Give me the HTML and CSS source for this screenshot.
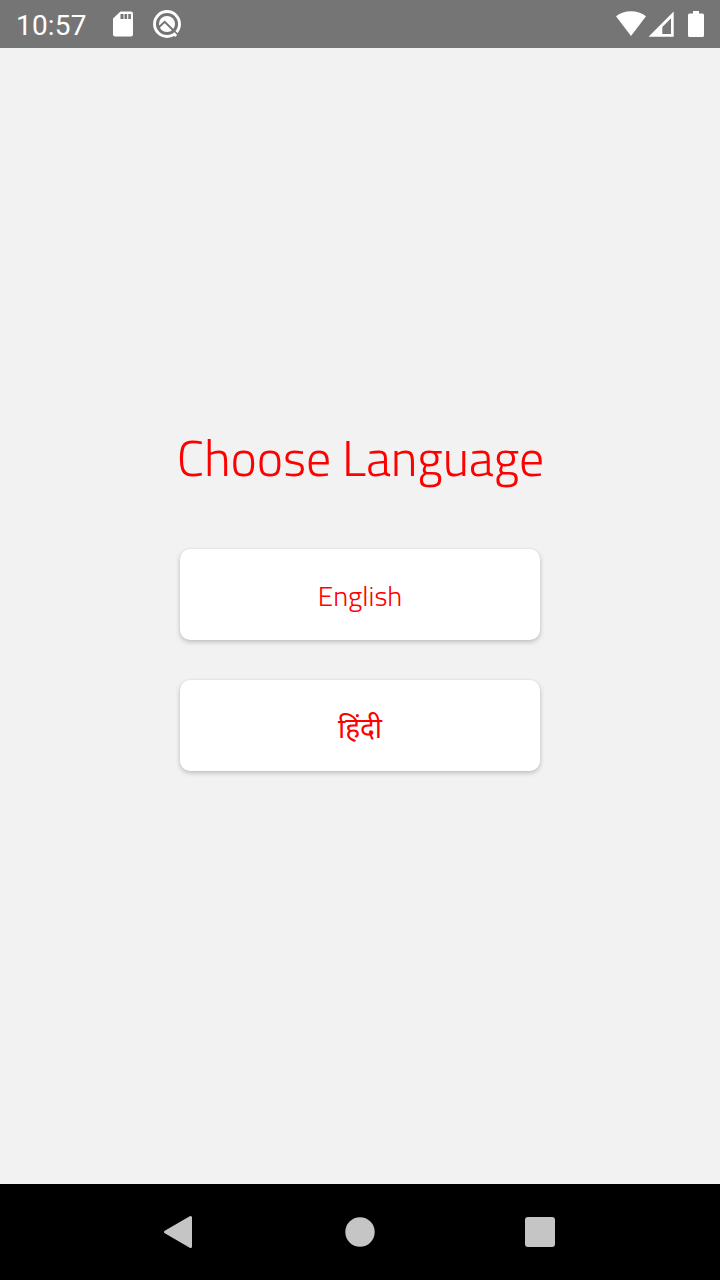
FILE: index.html
```html
<!DOCTYPE html>
<html lang="en">
<head>
<meta charset="utf-8">
<title>Choose Language</title>
<link rel="stylesheet" href="styles.css">
</head>
<body>
<div class="screen">
  <header class="status">
    <span class="clock">10:57</span>
    <svg class="sd" width="20" height="26" viewBox="0 0 20 26"><path fill="#fff" d="M7.5 .5H18a2 2 0 0 1 2 2v21a2 2 0 0 1-2 2H2a2 2 0 0 1-2-2V7.500z"/><path fill="#757575" d="M7.500 3h3v5h-3zM11.500 3h2.600v5h-2.600zM15.300 3h2.600v5h-2.600z"/></svg>
    <svg class="q" width="28" height="28" viewBox="0 0 28 28"><circle cx="14" cy="14" r="12.500" fill="none" stroke="#fff" stroke-width="2.900"/><circle cx="14" cy="14" r="8" fill="#fff"/><path fill="none" stroke="#757575" stroke-width="2" d="M4.800 18.300L11.700 11.800L27 27"/><path fill="none" stroke="#fff" stroke-width="2.800" d="M20.500 23.300l2.600 2.700"/></svg>
    <span class="grow"></span>
    <svg class="wifi" width="30" height="25" viewBox="0 0 30 25"><path fill="#fff" d="M0 5.200Q6.500 .3 15 .3T30 5.200L15 25z"/></svg>
    <svg class="signal" width="26" height="26" viewBox="0 0 26 26"><path fill="#fff" fill-rule="evenodd" d="M-.5 25.700L24.700 .5v25.200zM13.300 23h8.700V7.300l-8.700 8.700z"/></svg>
    <svg class="battery" width="16" height="26" viewBox="0 0 16 26"><path fill="#fff" d="M5 0h6v2.500h3.500A1.500 1.500 0 0 1 16 4v20.500a1.500 1.500 0 0 1-1.500 1.500h-13A1.500 1.500 0 0 1 0 24.500V4a1.500 1.500 0 0 1 1.500-1.500H5z"/></svg>
  </header>
  <main class="content">
    <h1 class="title">Choose Language</h1>
    <button class="choice english">English</button>
    <button class="choice hindi" lang="hi">हिंदी</button>
  </main>
  <nav class="nav">
    <svg width="32" height="34" viewBox="0 0 32 34"><path fill="#c5c5c5" stroke="#c5c5c5" stroke-width="3" stroke-linejoin="round" d="M28.500 2.500v29L3.500 17z"/></svg>
    <svg width="32" height="32" viewBox="0 0 32 32"><circle cx="16" cy="16" r="14.700" fill="#c5c5c5"/></svg>
    <svg width="30" height="30" viewBox="0 0 30 30"><rect width="30" height="30" rx="3" fill="#c5c5c5"/></svg>
  </nav>
</div>
</body>
</html>
```

FILE: styles.css
```css
body { margin: 0; }
.screen {
  display: flex;
  flex-direction: column;
  width: 720px;
  height: 1280px;
  background: #f2f2f2;
}
.status {
  display: flex;
  align-items: flex-start;
  box-sizing: border-box;
  height: 48px;
  padding: 0 16px;
  background: #757575;
  color: #fff;
}
.clock {
  width: 97px;
  font: 28px/52px Roboto, sans-serif;
  letter-spacing: .2px;
}
.sd { margin-top: 11px; }
.q { margin: 10px 0 0 20px; }
.grow { flex: 1; }
.wifi { margin-top: 11px; }
.signal { margin: 11px 0 0 3px; }
.battery { margin: 11px 0 0 13px; }
.content {
  flex: 1;
  display: flex;
  flex-direction: column;
  align-items: center;
  color: #f00;
  font-family: "Titillium Web", "Open Sans", "Noto Sans", sans-serif;
}
.title {
  margin: 373px 0 0;
  padding-left: 1px;
  height: 128px;
  font-size: 50px;
  line-height: 72px;
  font-weight: 300;
  letter-spacing: -.1px;
  white-space: nowrap;
}
.choice {
  box-sizing: border-box;
  width: 360px;
  height: 91px;
  margin: 0 0 40px;
  padding: 1px 0 0;
  border: 0;
  border-radius: 10px;
  background: #fff;
  box-shadow: 0 2px 5px rgba(0, 0, 0, .22), 0 0 2px rgba(0, 0, 0, .06);
  color: #f00;
  font-family: inherit;
  font-size: 28px;
  font-weight: 300;
}
.hindi {
  padding-top: 3px;
  font-size: 28px;
  font-weight: 400;
}
.nav {
  display: flex;
  align-items: center;
  justify-content: space-between;
  box-sizing: border-box;
  height: 96px;
  padding: 0 165px 0 162px;
  background: #000;
}
```
